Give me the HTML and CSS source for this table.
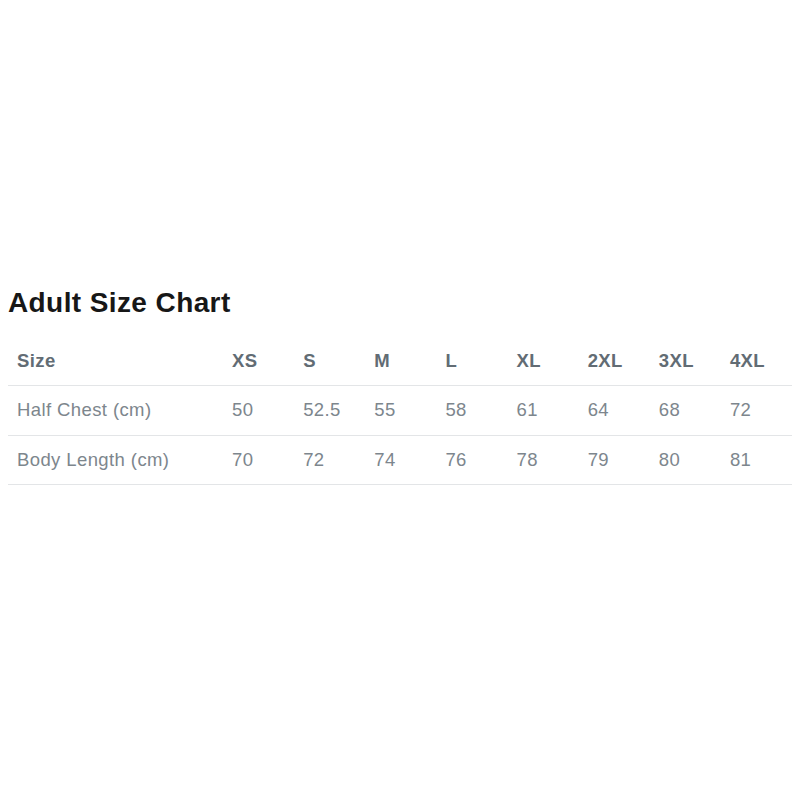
FILE: index.html
```html
<!DOCTYPE html>
<html>
<head>
<meta charset="utf-8">
<link rel="stylesheet" href="styles.css">
</head>
<body>
<div class="page">
  <h1 class="title">Adult Size Chart</h1>
  <table class="chart">
    <thead>
      <tr><th>Size</th><th>XS</th><th>S</th><th>M</th><th>L</th><th>XL</th><th>2XL</th><th>3XL</th><th>4XL</th></tr>
    </thead>
    <tbody>
      <tr><td>Half Chest (cm)</td><td>50</td><td>52.5</td><td>55</td><td>58</td><td>61</td><td>64</td><td>68</td><td>72</td></tr>
      <tr><td>Body Length (cm)</td><td>70</td><td>72</td><td>74</td><td>76</td><td>78</td><td>79</td><td>80</td><td>81</td></tr>
    </tbody>
  </table>
</div>
</body>
</html>
```
FILE: styles.css
```css
html, body { margin: 0; padding: 0; background: #fff; }
.page {
  padding: 285px 8px 0 8px;
  font-family: "Liberation Sans", Arial, sans-serif;
}
.title {
  margin: 0 0 15px 0;
  font-size: 28px;
  line-height: 36px;
  font-weight: 700;
  color: #171717;
  letter-spacing: 0.4px;
}
.chart {
  width: 784px;
  border-collapse: collapse;
  table-layout: fixed;
}
.chart th, .chart td {
  height: 49px;
  padding: 0 0 0 9px;
  text-align: left;
  border-bottom: 1px solid #e3e5e7;
  font-size: 18.5px;
  letter-spacing: 0.4px;
  vertical-align: middle;
}
.chart td { height: 48.5px; }
.chart th:first-child, .chart td:first-child { width: 206px; }
.chart th {
  font-weight: 700;
  color: #626c74;
}
.chart td {
  color: #7d868d;
}
```
